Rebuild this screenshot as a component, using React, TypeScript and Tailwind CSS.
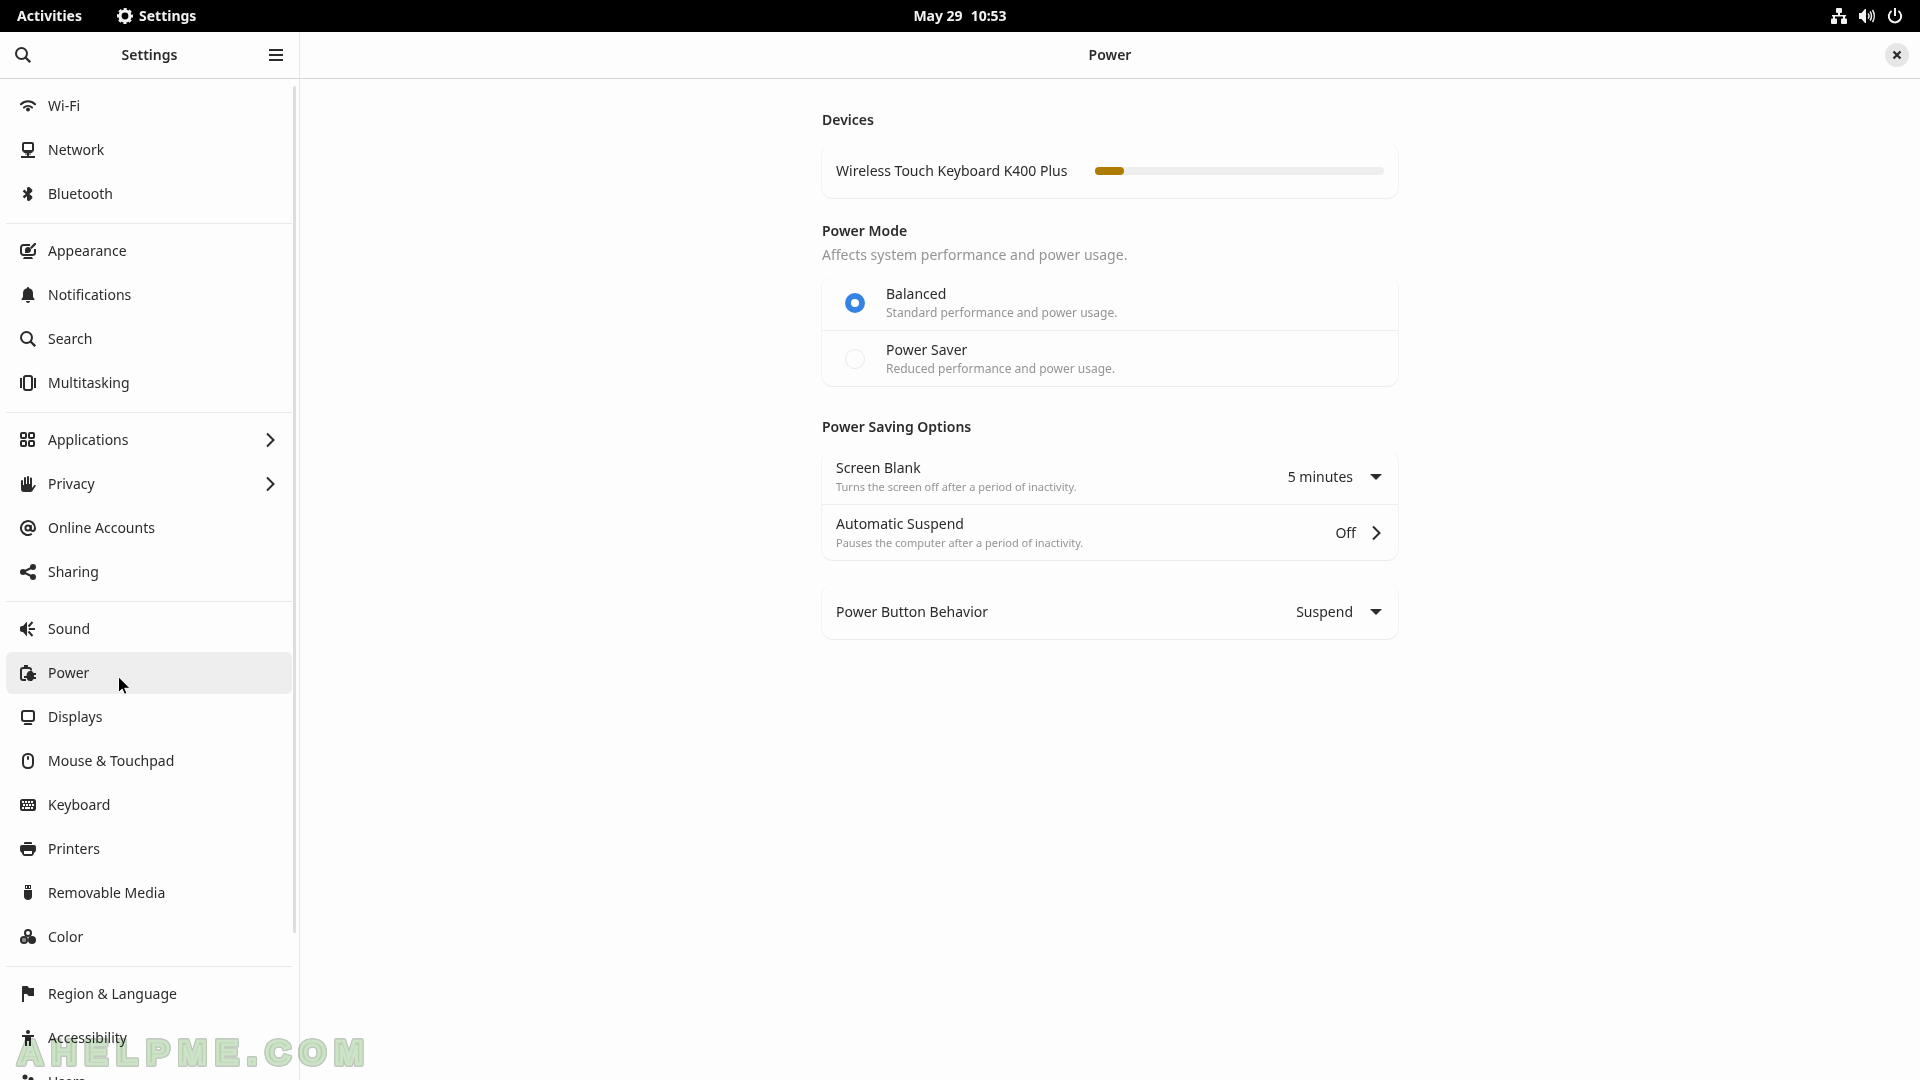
import { type ReactNode, useState } from "react";

function Icon({ children, size = 16 }: { children: ReactNode; size?: number }) {
  return (
    <svg width={size} height={size} viewBox="0 0 16 16" fill="currentColor" aria-hidden="true" className="shrink-0">
      {children}
    </svg>
  );
}

const line = { fill: "none", stroke: "currentColor", strokeWidth: 2 } as const;

const icons = {
  wifi: (
    <>
      <path d="M1 6.2a10 10 0 0 1 14 0M4 9.6a6 6 0 0 1 8 0" strokeLinecap="round" {...line} />
      <circle cx="8" cy="11.6" r="2" />
    </>
  ),
  network: (
    <>
      <rect x="3" y="1" width="10" height="8" rx="1" {...line} />
      <path d="M3 10h10l-1.500 1H4.500zM7 10h2v4H7zM5 11.500h6v1H5zM1 14h14v2H1z" />
    </>
  ),
  bluetooth: <path d="m3.500 4.500 8 6.800L8.200 14.300V1.700l3.300 3-8 6.800" strokeLinejoin="bevel" {...line} strokeWidth={2.400} />,
  appearance: (
    <>
      <path d="M10 2H3.500A2.500 2.500 0 0 0 1 4.500v5A2.500 2.500 0 0 0 3.500 12h9a2.500 2.500 0 0 0 2.500-2.500V6" {...line} />
      <path d="M4 14h8l1 2H3zM16 0v1.600L11.600 6 10 4.400 14.400 0zM5 10V6.800C5 5.200 6.500 4 8 4c1 0 1.600.4 2 1l1 1c.3 2-.8 4-3 4z" />
    </>
  ),
  bell: (
    <path d="M8 0C7.300 0 7 .5 7 1.200 4.700 1.600 3 3.500 3 6v3.500c0 1-1.500 1.500-1.500 3.500h13c0-2-1.500-2.500-1.500-3.500V6c0-2.500-1.700-4.400-4-4.800C9 .5 8.700 0 8 0zM6 14h4c0 1.200-.9 2-2 2s-2-.8-2-2z" />
  ),
  search: (
    <>
      <circle cx="6.500" cy="6.500" r="5.500" {...line} />
      <path d="m10.500 10.500 4.700 4.700" {...line} strokeWidth={2.300} />
    </>
  ),
  multitasking: (
    <>
      <rect x="4" y="1" width="8" height="14" rx="2" {...line} />
      <path d="M0 3h2v10H0zM14 3h2v10h-2z" />
    </>
  ),
  apps: (
    <>
      <rect x="1" y="1" width="5" height="5" rx="1" {...line} />
      <rect x="9" y="1" width="5" height="5" rx="1" {...line} />
      <rect x="1" y="9" width="5" height="5" rx="1" {...line} />
      <rect x="9" y="9" width="5" height="5" rx="1" {...line} />
    </>
  ),
  hand: (
    <path d="M1 5a1 1 0 0 1 2 0v4h1V2a1 1 0 0 1 2 0v6h1V1a1 1 0 0 1 2 0v7h1V2.500a1 1 0 0 1 2 0V12l2-2.500c.6-.6 1.500-.6 2 .1L12.700 14.500c-.7 1-1.700 1.500-3 1.500H4c-2 0-3-1.200-3-3z" />
  ),
  at: (
    <>
      <circle cx="8" cy="8" r="2.600" {...line} />
      <path d="M10.800 5v4c0 1.200.8 2 2 2s2.200-1 2.200-3a7 7 0 1 0-3.200 5.900" {...line} />
    </>
  ),
  share: (
    <>
      <circle cx="3" cy="8" r="3" />
      <circle cx="13" cy="3" r="3" />
      <circle cx="13" cy="13" r="3" />
      <path d="M13 3 3 8l10 5" {...line} />
    </>
  ),
  sound: (
    <>
      <path d="M7 1v14H6.500L3 11H2c-1.200 0-2-.9-2-2V7c0-1.100.8-2 2-2h1l3.500-4z" />
      <path d="M8.800 8H15M8.500 5.500l4-4.500M8.500 10.500l4 4.500" {...line} />
    </>
  ),
  power: (
    <>
      <path d="M6 15H3a2 2 0 0 1-2-2V5a2 2 0 0 1 2-2h6a2 2 0 0 1 2 2v.5" {...line} />
      <path d="M4 0h4v3H4zM10 6h2l1.500 2H16v2h-2v2h2v2h-2.500L12 16h-2c-2 0-3-1.200-3.300-3H4v-2h2.500C6.500 8 8 6 10 6z" />
    </>
  ),
  display: (
    <>
      <rect x="2" y="2" width="12" height="10" rx="2" {...line} />
      <path d="M4.500 14h7l1 2h-9z" />
    </>
  ),
  mouse: (
    <>
      <rect x="3" y="1" width="10" height="14" rx="4.500" {...line} />
      <rect x="7" y="3" width="2" height="4" rx="1" />
    </>
  ),
  keyboard: (
    <path
      fillRule="evenodd"
      d="M2.500 2h11A2.500 2.500 0 0 1 16 4.500v7a2.500 2.500 0 0 1-2.500 2.500h-11A2.500 2.500 0 0 1 0 11.500v-7A2.500 2.500 0 0 1 2.500 2zM2 4v2h2V4zm3 0v2h2V4zm3 0v2h2V4zm3 0v2h2V4zM3 7v2h2V7zm3 0v2h2V7zm3 0v2h2V7zm3 0v2h2V7zM2 10v2h2v-2zm3 0v2h5v-2zm6 0v2h2v-2z"
    />
  ),
  printer: (
    <path
      fillRule="evenodd"
      d="M5 1h6a1 1 0 0 1 1 1v1H4V2a1 1 0 0 1 1-1zM2 4h12a2 2 0 0 1 2 2v3a3 3 0 0 1-2 2.800c0 2-1 3.200-3 3.200H5c-2 0-3-1.200-3-3.200A3 3 0 0 1 0 9V6a2 2 0 0 1 2-2zm2 6v3h8v-3z"
    />
  ),
  usb: (
    <path
      fillRule="evenodd"
      d="M5 0h6v4H5zm1 1v2h1V1zm3 0v2h1V1zM4 5h8v6.500C12 13.500 10.200 15 8 15s-4-1.500-4-3.500z"
    />
  ),
  color: (
    <>
      <circle cx="8" cy="4" r="3" {...line} />
      <circle cx="4" cy="11" r="4" />
      <circle cx="4" cy="11" r="2.200" fill="#8c8c8c" />
      <circle cx="12" cy="11" r="4" />
    </>
  ),
  flag: <path d="M2 1a1 1 0 0 1 1-1h4.500l1.500 2h5v8H8.500L7 8H4v8H2z" />,
  accessibility: (
    <>
      <circle cx="8" cy="2" r="2" />
      <path d="M2 5h12v2h-3v9H9v-5H7v5H5V7H2z" />
    </>
  ),
  users: (
    <>
      <circle cx="5" cy="3" r="2.500" />
      <circle cx="11" cy="5.500" r="2.500" />
      <path d="M0 12a4 4 0 0 1 8 0v2H0zM8 13a3.500 3.500 0 0 1 7 0v3H8z" />
    </>
  ),
  gear: (
    <>
      <circle cx="8" cy="8" r="5" fill="none" stroke="currentColor" strokeWidth="3.200" />
      <circle cx="8" cy="8" r="7" fill="none" stroke="currentColor" strokeWidth="2" strokeDasharray="3.100 2.398" strokeDashoffset="1.550" />
    </>
  ),
  wired: (
    <>
      <path d="M7 4h2v4H7zM1 7h14v1.600H1zM2 8h2v3H2zM12 8h2v3h-2z" />
      <rect x="5" y="0" width="6" height="5" rx="1" />
      <rect x="0" y="10.500" width="6" height="5.500" rx="1" />
      <rect x="10" y="10.500" width="6" height="5.500" rx="1" />
    </>
  ),
  volume: (
    <>
      <path d="M0 5h2.500L6 1h1v14H6l-3.500-4H0z" />
      <path d="M9 5.500a3.500 3.500 0 0 1 0 5M11 3.500c2 2.500 2 6.500 0 9M13.500 2c2.300 3.500 2.300 8.500 0 12" {...line} strokeWidth={1.500} />
    </>
  ),
  shutdown: <path d="M4.600 3A6.200 6.200 0 1 0 11.400 3M8 0v8" {...line} />,
  menu: <path d="M1 2h14v2H1zM1 7h14v2H1zM1 12h14v2H1z" />,
  close: <path d="m4 4 8 8M12 4l-8 8" {...line} strokeWidth={2.600} />,
  chevron: <path d="m5 1.500 6.500 6.500L5 14.500" {...line} />,
};

type Item = { label: string; icon: keyof typeof icons; sub?: boolean };

const groups: Item[][] = [
  [
    { label: "Wi-Fi", icon: "wifi" },
    { label: "Network", icon: "network" },
    { label: "Bluetooth", icon: "bluetooth" },
  ],
  [
    { label: "Appearance", icon: "appearance" },
    { label: "Notifications", icon: "bell" },
    { label: "Search", icon: "search" },
    { label: "Multitasking", icon: "multitasking" },
  ],
  [
    { label: "Applications", icon: "apps", sub: true },
    { label: "Privacy", icon: "hand", sub: true },
    { label: "Online Accounts", icon: "at" },
    { label: "Sharing", icon: "share" },
  ],
  [
    { label: "Sound", icon: "sound" },
    { label: "Power", icon: "power" },
    { label: "Displays", icon: "display" },
    { label: "Mouse & Touchpad", icon: "mouse" },
    { label: "Keyboard", icon: "keyboard" },
    { label: "Printers", icon: "printer" },
    { label: "Removable Media", icon: "usb" },
    { label: "Color", icon: "color" },
  ],
  [
    { label: "Region & Language", icon: "flag" },
    { label: "Accessibility", icon: "accessibility" },
    { label: "Users", icon: "users" },
  ],
];

function TopBar() {
  return (
    <header className="grid h-8 shrink-0 grid-cols-[1fr_auto_1fr] items-center bg-black px-[17px] font-bold text-[#f2f2f2]">
      <div className="flex items-center gap-[35px]">
        <button type="button">Activities</button>
        <button type="button" className="flex items-center gap-1.5">
          <Icon>{icons.gear}</Icon>
          Settings
        </button>
      </div>
      <button type="button" className="flex gap-2">
        <span>May 29</span>
        <span>10:53</span>
      </button>
      <button type="button" aria-label="System menu" className="flex items-center gap-3 justify-self-end">
        <Icon>{icons.wired}</Icon>
        <Icon>{icons.volume}</Icon>
        <Icon>{icons.shutdown}</Icon>
      </button>
    </header>
  );
}

function Sidebar() {
  const [active, setActive] = useState("Power");
  return (
    <aside className="flex min-h-0 w-[300px] shrink-0 flex-col border-r border-[#e6e6e6]">
      <div className="flex h-[47px] shrink-0 items-center justify-between border-b border-[#d5d5d5] px-[15px]">
        <button type="button" aria-label="Search">
          <Icon>{icons.search}</Icon>
        </button>
        <h1 className="font-semibold">Settings</h1>
        <button type="button" aria-label="Menu">
          <Icon>{icons.menu}</Icon>
        </button>
      </div>
      <div className="relative min-h-0 flex-1 overflow-hidden">
        <nav className="flex flex-col py-1.5 pr-[7px] pl-1.5">
          {groups.map((group) => (
            <ul
              key={group[0].label}
              className="flex flex-col gap-0.5 border-[#e9e9e9] not-first:mt-2 not-first:border-t not-first:pt-1.5"
            >
              {group.map((item) => (
                <li key={item.label}>
                  <button
                    type="button"
                    onClick={() => setActive(item.label)}
                    aria-current={active === item.label ? "page" : undefined}
                    className="flex h-[42px] w-full items-center gap-3 rounded-md px-3.5 text-left aria-[current=page]:bg-[#eeeeee]"
                  >
                    <Icon>{icons[item.icon]}</Icon>
                    <span className="flex-1">{item.label}</span>
                    {item.sub && <Icon>{icons.chevron}</Icon>}
                  </button>
                </li>
              ))}
            </ul>
          ))}
        </nav>
        <div className="absolute top-[7px] right-[3px] bottom-[147px] w-[3px] rounded-full bg-[#dedede]" />
      </div>
    </aside>
  );
}

function Card({ children }: { children: ReactNode }) {
  return (
    <div className="divide-y divide-[#efefef] rounded-xl border border-t-0 border-[#f3f3f3] border-b-[#ececec] bg-[#fdfdfd]">
      {children}
    </div>
  );
}

function Choice({ id, title, detail, checked }: { id: string; title: string; detail: string; checked?: boolean }) {
  return (
    <div className="flex h-[55px] items-center gap-[21px] pl-[23px]">
      <input
        id={id}
        type="radio"
        name="power-mode"
        defaultChecked={checked}
        className="size-5 appearance-none rounded-full border border-[#e9e9e9] checked:border-6 checked:border-[#3584e4] checked:bg-white"
      />
      <label htmlFor={id} className="flex-1">
        <span className="block leading-5">{title}</span>
        <span className="block text-xs leading-[18px] text-[#949494]">{detail}</span>
      </label>
    </div>
  );
}

function Picker({ id, options }: { id: string; options: string[] }) {
  return (
    <span className="flex items-center">
      <select id={id} className="field-sizing-content appearance-none bg-transparent pr-[31px] text-right">
        {options.map((option) => (
          <option key={option}>{option}</option>
        ))}
      </select>
      <svg width="12" height="6" viewBox="0 0 12 6" fill="currentColor" aria-hidden="true" className="pointer-events-none -ml-[14px] mr-0.5">
        <path d="M0 0h12L6 6z" />
      </svg>
    </span>
  );
}

function PowerPanel() {
  return (
    <main className="flex min-w-0 flex-1 flex-col">
      <div className="grid h-[47px] shrink-0 grid-cols-[1fr_auto_1fr] items-center border-b border-[#d5d5d5] px-[11px]">
        <h2 className="col-start-2 font-semibold">Power</h2>
        <button
          type="button"
          aria-label="Close"
          className="flex size-6 items-center justify-center justify-self-end rounded-full bg-[#e6e6e6]"
        >
          <Icon size={14}>{icons.close}</Icon>
        </button>
      </div>
      <div className="mx-auto w-full max-w-[578px] pt-[30px]">
        <section>
          <h3 className="pl-px font-semibold leading-[22px]">Devices</h3>
          <div className="mt-3">
            <Card>
              <div className="flex h-[55px] items-center gap-7 px-3.5">
                <span id="device-name" className="whitespace-nowrap">
                  Wireless Touch Keyboard K400 Plus
                </span>
                <div
                  role="meter"
                  aria-labelledby="device-name"
                  aria-valuenow={10}
                  className="h-2 flex-1 rounded-full bg-[#eeeeee]"
                >
                  <div className="h-full rounded-full bg-[#ae7b03]" style={{ width: "10%" }} />
                </div>
              </div>
            </Card>
          </div>
        </section>
        <section className="mt-[21px]">
          <h3 className="pl-px font-semibold leading-[22px]">Power Mode</h3>
          <p className="pl-px leading-[26px] text-[#949494]">Affects system performance and power usage.</p>
          <div className="mt-2">
            <Card>
              <Choice id="balanced" title="Balanced" detail="Standard performance and power usage." checked />
              <Choice id="saver" title="Power Saver" detail="Reduced performance and power usage." />
            </Card>
          </div>
        </section>
        <section className="mt-[29px]">
          <h3 className="pl-px font-semibold leading-[22px]">Power Saving Options</h3>
          <div className="mt-3">
            <Card>
              <div className="flex h-[55px] items-center justify-between px-3.5">
                <label htmlFor="blank">
                  <span className="block leading-5">Screen Blank</span>
                  <span className="block text-[11px] leading-[18px] text-[#949494]">
                    Turns the screen off after a period of inactivity.
                  </span>
                </label>
                <Picker id="blank" options={["5 minutes", "10 minutes", "15 minutes", "Never"]} />
              </div>
              <button type="button" className="flex h-[55px] w-full items-center px-3.5 text-left">
                <span className="flex-1">
                  <span className="block leading-5">Automatic Suspend</span>
                  <span className="block text-[11px] leading-[18px] text-[#949494]">
                    Pauses the computer after a period of inactivity.
                  </span>
                </span>
                <span className="mr-3">Off</span>
                <Icon>{icons.chevron}</Icon>
              </button>
            </Card>
          </div>
          <div className="mt-[23px]">
            <Card>
              <div className="flex h-[55px] items-center justify-between px-3.5">
                <label htmlFor="behavior">Power Button Behavior</label>
                <Picker id="behavior" options={["Suspend", "Power Off", "Hibernate", "Nothing"]} />
              </div>
            </Card>
          </div>
        </section>
      </div>
    </main>
  );
}

export default function App() {
  return (
    <div className="relative flex h-screen flex-col overflow-hidden bg-[#fdfdfd] font-['Noto_Sans',sans-serif] text-sm text-[#2b2b2b]">
      <TopBar />
      <div className="flex min-h-0 flex-1">
        <Sidebar />
        <PowerPanel />
      </div>
      <svg width="13" height="19" viewBox="0 0 13 19" aria-hidden="true" className="pointer-events-none absolute top-[676px] left-[118px]">
        <path d="M.5.7v15.800l3.700-3.400 2.300 5.200 2.500-1-2.300-5h5.300z" fill="#000" stroke="#fff" strokeWidth="1" />
      </svg>
      <div className="pointer-events-none absolute bottom-2 left-[18px] font-['Liberation_Sans',sans-serif] text-[34px] leading-10 font-bold tracking-[9px] text-[#b9d3b0] mix-blend-multiply [-webkit-text-stroke:3px_#cfe5c9] [filter:drop-shadow(1px_0_#bfc9bd)_drop-shadow(-1px_0_#bfc9bd)_drop-shadow(0_1px_#bfc9bd)_drop-shadow(0_-1px_#bfc9bd)]">
        AHELPME.COM
      </div>
    </div>
  );
}
